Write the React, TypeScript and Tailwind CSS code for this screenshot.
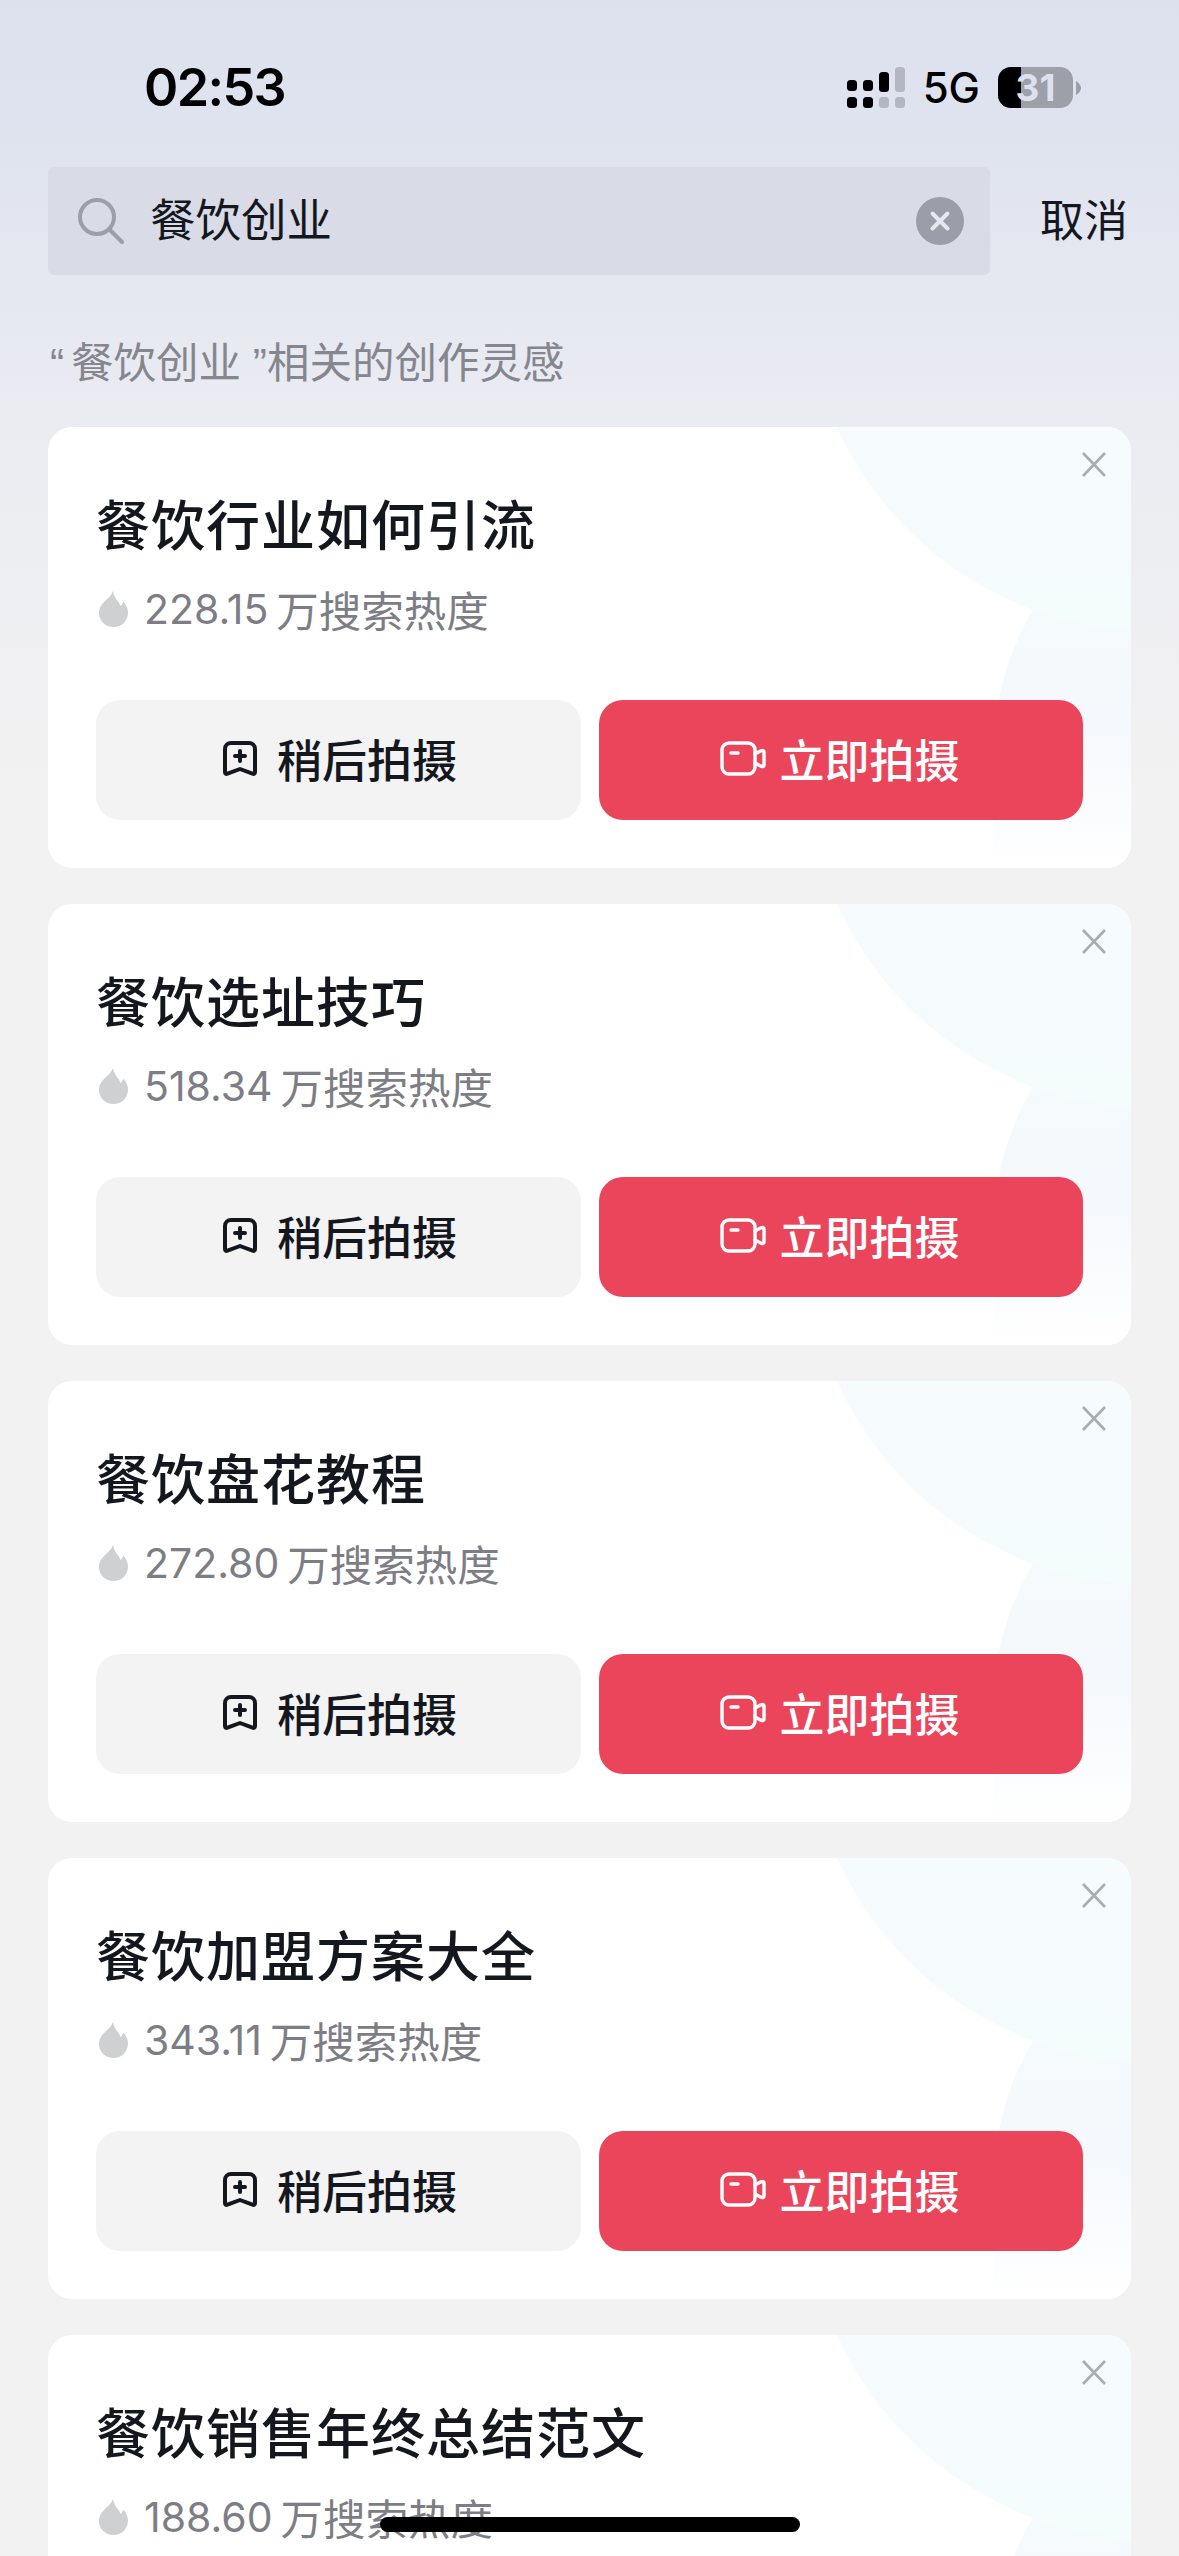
import React from "react";

const cjk = "font-['Noto_Sans_CJK_SC',sans-serif]";

const items = [
  { title: "餐饮行业如何引流", heat: "228.15", buttons: true },
  { title: "餐饮选址技巧", heat: "518.34", buttons: true },
  { title: "餐饮盘花教程", heat: "272.80", buttons: true },
  { title: "餐饮加盟方案大全", heat: "343.11", buttons: true },
  { title: "餐饮销售年终总结范文", heat: "188.60", buttons: false },
];

function Signal() {
  return (
    <svg width="58" height="41" viewBox="0 0 58 41" className="block">
      <rect x="0" y="13" width="10" height="11" rx="3.5" fill="#000" />
      <rect x="0" y="30" width="10" height="11" rx="3.5" fill="#000" />
      <rect x="16" y="13" width="10" height="11" rx="3.5" fill="#000" />
      <rect x="16" y="30" width="10" height="11" rx="3.5" fill="#000" />
      <rect x="32" y="5" width="10" height="20" rx="3.5" fill="#000" />
      <rect x="32" y="30" width="10" height="11" rx="3.5" fill="#b4b7c2" />
      <rect x="48" y="0" width="10" height="25" rx="3.5" fill="#b4b7c2" />
      <rect x="48" y="30" width="10" height="11" rx="3.5" fill="#b4b7c2" />
    </svg>
  );
}

function Battery() {
  return (
    <div className="flex items-center gap-[3px]">
      <div className="relative flex h-[41px] w-[75px] items-center justify-center overflow-hidden rounded-[13px] bg-[#9d9fa9]">
        <div className="absolute left-0 top-0 h-full w-[23px] bg-black" />
        <span className="relative font-['Inter',sans-serif] text-[37px] font-bold leading-none text-[#dde1ee]">31</span>
      </div>
      <svg width="5" height="14" viewBox="0 0 5 14" className="block">
        <path d="M0 0 C3 2 5 4 5 7 C5 10 3 12 0 14 Z" fill="#9d9fa9" />
      </svg>
    </div>
  );
}

function Flame() {
  return (
    <svg width="29" height="36" viewBox="0 0 29 36" className="block shrink-0">
      <path
        d="M14 0 C15 5 17 8 19.5 11 C20.5 12.2 21 13.5 21.3 15 C22.8 14 24 12.3 24.3 10.5 C27.2 13.5 29 17.5 29 21.5 C29 30 22.5 36 14.5 36 C6.5 36 0 30 0 22 C0 17 2.5 13.5 5.5 10.5 C9 7.2 12.5 4.5 14 0 Z"
        fill="#cfd0d2"
      />
    </svg>
  );
}

function Bookmark() {
  return (
    <svg width="34" height="35" viewBox="0 0 34 35" className="block shrink-0" fill="none" stroke="#15171f" strokeWidth="4" strokeLinecap="round" strokeLinejoin="round">
      <path d="M2 8 a6 6 0 0 1 6 -6 h18 a6 6 0 0 1 6 6 v23 q0 2.5 -2.5 1.7 L17 28 L4.5 32.7 Q2 33.5 2 31 Z" />
      <path d="M17 10 v10 M12 15 h10" />
    </svg>
  );
}

function Video() {
  return (
    <svg width="46" height="35" viewBox="0 0 46 35" className="block shrink-0" fill="none" stroke="#fff" strokeWidth="3.4" strokeLinecap="round" strokeLinejoin="round">
      <rect x="2" y="2" width="33" height="31" rx="7" />
      <path d="M11 12 h7" />
      <path d="M35 13 L41 9.8 Q44 8.6 44 11 V24 Q44 26.4 41 25.2 L35 22" />
    </svg>
  );
}

function Decoration() {
  return (
    <svg width="1083" height="441" viewBox="0 0 1083 441" className="absolute inset-0 block" fill="none">
      <defs>
        <linearGradient id="decoA" x1="0" y1="0" x2="0" y2="1">
          <stop offset="0" stopColor="#f6fbfd" />
          <stop offset="1" stopColor="#f5fcfc" />
        </linearGradient>
        <linearGradient id="decoB" x1="0" y1="0" x2="0" y2="1">
          <stop offset="0" stopColor="#f5fafc" />
          <stop offset="0.45" stopColor="#f5f8fc" />
          <stop offset="1" stopColor="#ffffff" />
        </linearGradient>
      </defs>
      <path d="M985 183 C966 215 956 245 951 273 L944 441 L1083 441 L1083 180 Z" fill="url(#decoB)" />
      <path d="M789 0 C830 90 900 150 985 183 C1015 195 1050 200 1083 204 L1083 0 Z" fill="url(#decoA)" />
    </svg>
  );
}

function Card({ title, heat, buttons }: { title: string; heat: string; buttons: boolean }) {
  return (
    <div className="relative h-[441px] w-[1083px] shrink-0 overflow-hidden rounded-[24px] bg-white">
      <Decoration />
      <svg width="24" height="25" viewBox="0 0 24 25" className="absolute right-[25px] top-[25px] block" fill="none" stroke="#a8adb0" strokeWidth="2.6">
        <path d="M1 1 L23 24 M23 1 L1 24" />
      </svg>
      <div className="relative flex h-full flex-col px-[48px] pt-[68px]">
        <div className={`${cjk} h-[56px] text-[54px] font-medium leading-[56px] tracking-[1px] text-[#15171f]`}>{title}</div>
        <div className="mt-[33px] flex h-[50px] items-center gap-[16px] pl-[3px]">
          <Flame />
          <span className="flex items-center text-[#7d7e85]">
            <span className="font-['Inter',sans-serif] text-[41px] leading-[50px]">{heat}</span>
            <span className={`${cjk} ml-[8px] text-[42.5px] leading-[50px]`}>万搜索热度</span>
          </span>
        </div>
        {buttons && (
          <div className="mt-[66px] flex gap-[18px]">
            <div className="flex h-[120px] w-[485px] items-center justify-center gap-[20px] rounded-[24px] bg-[#f3f3f4] pb-[3px] pl-[3px]">
              <Bookmark />
              <span className={`${cjk} text-[45px] font-medium leading-none text-[#15171f]`}>稍后拍摄</span>
            </div>
            <div className="flex h-[120px] w-[484px] items-center justify-center gap-[13px] rounded-[24px] bg-[#eb455c] pb-[3px] pr-[2px]">
              <Video />
              <span className={`${cjk} text-[45px] font-medium leading-none text-white`}>立即拍摄</span>
            </div>
          </div>
        )}
      </div>
    </div>
  );
}

export default function App() {
  return (
    <div className="relative h-[2556px] w-[1179px] overflow-hidden bg-[linear-gradient(180deg,#dde1ee_0px,#e0e4ef_160px,#ebecf2_420px,#f2f2f2_800px)]">
      <div className="flex h-[167px] items-start justify-between pl-[144px] pr-[98px] pt-[67px]">
        <span className="font-['Inter',sans-serif] text-[52px] font-semibold leading-[41px] tracking-[-1.6px] text-black">02:53</span>
        <div className="flex items-center gap-[18px]">
          <Signal />
          <span className="font-['Inter',sans-serif] text-[42px] font-medium leading-[41px] text-black">5G</span>
          <Battery />
        </div>
      </div>

      <div className="flex h-[108px] items-center pl-[48px] pr-[51px]">
        <div className="flex h-[108px] w-[942px] items-center rounded-[6px] bg-[#d9dce6] pl-[30px] pr-[26px]">
          <svg width="46" height="46" viewBox="0 0 46 46" className="block shrink-0" fill="none" stroke="#9c9ea8" strokeWidth="4" strokeLinecap="round">
            <circle cx="19" cy="19" r="17" />
            <path d="M31.5 31.5 L44 44" />
          </svg>
          <span className={`${cjk} ml-[26px] flex-1 pb-[6px] text-[45.5px] leading-none text-[#15171f]`}>餐饮创业</span>
          <svg width="48" height="48" viewBox="0 0 48 48" className="block shrink-0">
            <circle cx="24" cy="24" r="24" fill="#9b9da8" />
            <path d="M16.5 16.5 L31.5 31.5 M31.5 16.5 L16.5 31.5" stroke="#e6e8ef" strokeWidth="4" strokeLinecap="round" />
          </svg>
        </div>
        <span className={`${cjk} ml-auto pb-[6px] text-[44px] leading-none text-[#15171f]`}>取消</span>
      </div>

      <div className={`${cjk} flex h-[152px] items-center pl-[50px] pt-[22px] text-[42.5px] leading-none text-[#85868e]`}>
        <span>
          <span className="inline-block w-[21px] font-['Liberation_Sans',sans-serif]">“</span>餐饮创业<span className="inline-block w-[26px] text-right font-['Liberation_Sans',sans-serif]">”</span>相关的创作灵感
        </span>
      </div>

      <div className="flex flex-col items-center gap-[36px]">
        {items.map((it) => (
          <Card key={it.title} title={it.title} heat={it.heat} buttons={it.buttons} />
        ))}
      </div>

      <div className="absolute left-[380px] top-[2517px] h-[15px] w-[420px] rounded-full bg-black" />
    </div>
  );
}
